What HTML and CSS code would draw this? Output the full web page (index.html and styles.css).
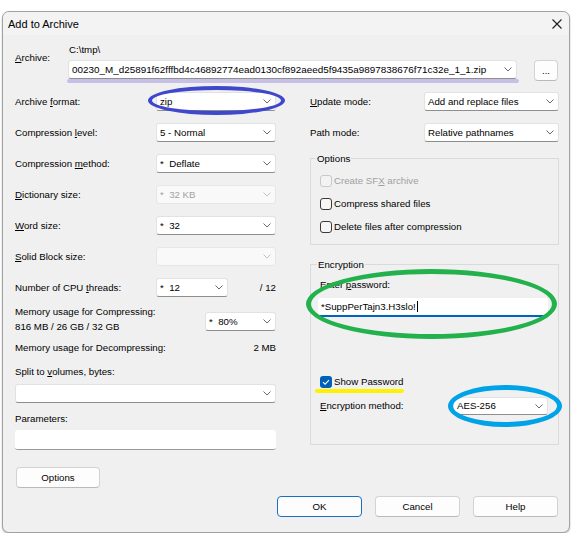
FILE: index.html
```html
<!DOCTYPE html>
<html lang="en">
<head>
<meta charset="utf-8">
<title>Add to Archive</title>
<link rel="stylesheet" href="styles.css">
</head>
<body>
<div class="dialog">
  <div class="titlebar">
    <span class="title">Add to Archive</span>
    <svg class="close" width="10" height="10" viewBox="0 0 10 10"><path d="M0.5 0.5L9.5 9.5M9.5 0.5L0.5 9.5" stroke="#1c1c1c" stroke-width="1.1" fill="none"/></svg>
  </div>

  <div class="content">
    <div class="archive">
      <span class="archive-label"><u>A</u>rchive:</span>
      <span class="archive-dir">C:\tmp\</span>
      <div class="combo archive-combo"><span class="path">00230_M_d25891f62fffbd4c46892774ead0130cf892aeed5f9435a9897838676f71c32e_1_1.zip</span><svg class="chev" width="8" height="5" viewBox="0 0 8 5"><path d="M0.5 0.5L4 4L7.5 0.5" fill="none" stroke="#6a6a6a"/></svg></div>
      <button class="btn browse">...</button>
    </div>

    <div class="columns">
      <div class="col-left">
        <div class="row"><span>Archive <u>f</u>ormat:</span><div class="combo"><span>zip</span><svg class="chev" width="8" height="5" viewBox="0 0 8 5"><path d="M0.5 0.5L4 4L7.5 0.5" fill="none" stroke="#6a6a6a"/></svg></div></div>
        <div class="row"><span>Compression <u>l</u>evel:</span><div class="combo"><span>5 - Normal</span><svg class="chev" width="8" height="5" viewBox="0 0 8 5"><path d="M0.5 0.5L4 4L7.5 0.5" fill="none" stroke="#6a6a6a"/></svg></div></div>
        <div class="row"><span>Compression <u>m</u>ethod:</span><div class="combo"><span>*&nbsp; Deflate</span><svg class="chev" width="8" height="5" viewBox="0 0 8 5"><path d="M0.5 0.5L4 4L7.5 0.5" fill="none" stroke="#6a6a6a"/></svg></div></div>
        <div class="row"><span><u>D</u>ictionary size:</span><div class="combo disabled"><span>*&nbsp; 32 KB</span><svg class="chev" width="8" height="5" viewBox="0 0 8 5"><path d="M0.5 0.5L4 4L7.5 0.5" fill="none" stroke="#c4c4c4"/></svg></div></div>
        <div class="row"><span><u>W</u>ord size:</span><div class="combo"><span>*&nbsp; 32</span><svg class="chev" width="8" height="5" viewBox="0 0 8 5"><path d="M0.5 0.5L4 4L7.5 0.5" fill="none" stroke="#6a6a6a"/></svg></div></div>
        <div class="row"><span><u>S</u>olid Block size:</span><div class="combo disabled"><span></span><svg class="chev" width="8" height="5" viewBox="0 0 8 5"><path d="M0.5 0.5L4 4L7.5 0.5" fill="none" stroke="#c4c4c4"/></svg></div></div>
        <div class="row row-cpu"><span>Number of CPU <u>t</u>hreads:</span><div class="combo"><span>*&nbsp; 12</span><svg class="chev" width="8" height="5" viewBox="0 0 8 5"><path d="M0.5 0.5L4 4L7.5 0.5" fill="none" stroke="#6a6a6a"/></svg></div><span class="num">/ 12</span></div>

        <div class="mem">
          <div class="mem-text">
            <div>Memory usage for Compressing:</div>
            <div>816 MB / 26 GB / 32 GB</div>
          </div>
          <div class="combo mem-combo"><span>*&nbsp; 80%</span><svg class="chev" width="8" height="5" viewBox="0 0 8 5"><path d="M0.5 0.5L4 4L7.5 0.5" fill="none" stroke="#6a6a6a"/></svg></div>
        </div>

        <div class="decomp"><span>Memory usage for Decompressing:</span><span>2 MB</span></div>

        <div class="field-label split-label">Split to <u>v</u>olumes, bytes:</div>
        <div class="combo wide"><span></span><svg class="chev" width="8" height="5" viewBox="0 0 8 5"><path d="M0.5 0.5L4 4L7.5 0.5" fill="none" stroke="#6a6a6a"/></svg></div>

        <div class="field-label">Parameters:</div>
        <div class="textbox"></div>

        <button class="btn options-btn">Options</button>
      </div>

      <div class="col-right">
        <div class="row row-r"><span><u>U</u>pdate mode:</span><div class="combo"><span>Add and replace files</span><svg class="chev" width="8" height="5" viewBox="0 0 8 5"><path d="M0.5 0.5L4 4L7.5 0.5" fill="none" stroke="#6a6a6a"/></svg></div></div>
        <div class="row row-r"><span>Path mode:</span><div class="combo"><span>Relative pathnames</span><svg class="chev" width="8" height="5" viewBox="0 0 8 5"><path d="M0.5 0.5L4 4L7.5 0.5" fill="none" stroke="#6a6a6a"/></svg></div></div>

        <fieldset class="group group-options">
          <legend>Options</legend>
          <div class="checks">
            <div class="check disabled"><span class="box"></span><span>Create SF<u>X</u> archive</span></div>
            <div class="check"><span class="box"></span><span>Compress shared files</span></div>
            <div class="check"><span class="box"></span><span>Delete files after compression</span></div>
          </div>
        </fieldset>

        <fieldset class="group group-enc">
          <legend>Encryption</legend>
          <div class="enc-label">Enter <u>p</u>assword:</div>
          <div class="pw-input"><span>*SuppPerTajn3.H3slo!</span><span class="caret"></span></div>
          <div class="check checked show-pw"><span class="box"><svg width="12" height="12" viewBox="0 0 12 12"><path d="M3 6.2L5.1 8.2L9 4.2" fill="none" stroke="#fff" stroke-width="1.1"/></svg></span><span>Show Password</span></div>
          <div class="enc-method"><span><u>E</u>ncryption method:</span><div class="combo"><span>AES-256</span><svg class="chev" width="8" height="5" viewBox="0 0 8 5"><path d="M0.5 0.5L4 4L7.5 0.5" fill="none" stroke="#6a6a6a"/></svg></div></div>
        </fieldset>
      </div>
    </div>

    <div class="footer">
      <button class="btn default">OK</button>
      <button class="btn">Cancel</button>
      <button class="btn">Help</button>
    </div>
  </div>

  <!-- hand-drawn highlight marks over the form -->
  <div class="mark mark-path"></div>
  <div class="mark ring ring-format"></div>
  <div class="mark ring ring-password"></div>
  <div class="mark mark-show"></div>
  <div class="mark ring ring-method"></div>
</div>
</body>
</html>
```

FILE: styles.css
```css
* { box-sizing: border-box; }

html, body {
  margin: 0;
  background: #ffffff;
}

body {
  font-family: "Liberation Sans", Arial, sans-serif;
  font-size: 9.7px;
  line-height: 14px;
  color: #000;
}

u { text-underline-offset: 1px; }

/* window frame */
.dialog {
  position: relative;
  width: 568px;
  margin: 11px 0 0 2px;
  background: #f0f0f0;
  border: 1px solid #a2a2a2;
  border-radius: 7px;
  box-shadow: 0 1px 2px rgba(0, 0, 0, 0.28);
}

.titlebar {
  height: 23px;
  display: flex;
  align-items: center;
  justify-content: space-between;
  padding: 0 7px 0 5px;
  background: #f3f3f3;
  border-radius: 7px 7px 0 0;
}

.title { font-size: 11px; }

.content {
  padding: 0 10px 15px 12px;
}

/* archive path */
.archive {
  display: grid;
  grid-template-columns: 36px 449px 24px;
  grid-template-rows: 14px 20px;
  column-gap: 17px;
  row-gap: 3px;
  padding-top: 8px;
}

.archive-label {
  grid-column: 1;
  grid-row: 1 / 3;
  align-self: center;
  padding: 0 0 7px 0;
  white-space: nowrap;
}

.archive-dir {
  grid-column: 2;
  grid-row: 1;
  padding-left: 1px;
}

.archive-combo {
  grid-column: 2;
  grid-row: 2;
  height: 20px;
  border-color: #b8b8b8;
  border-bottom-color: #8a8a8a;
}

.archive-combo .path { font-size: 9.9px; }

.browse {
  grid-column: 3;
  grid-row: 2;
  height: 21px;
  padding: 0;
  align-self: center;
}

/* combo boxes */
.combo {
  height: 19px;
  display: flex;
  align-items: center;
  justify-content: space-between;
  padding: 0 4px 0 3px;
  background: #fff;
  border: 1px solid #e2e2e2;
  border-bottom-color: #8e8e8e;
  border-radius: 3px;
  white-space: nowrap;
  overflow: hidden;
}

.combo .chev { flex: none; }

.combo.disabled {
  background: #f9f9f9;
  border-color: #e6e6e6;
  color: #a2a2a2;
}

/* two columns */
.columns {
  display: grid;
  grid-template-columns: 261px 249px;
  column-gap: 34px;
  align-items: start;
  margin-top: 6px;
}

.row {
  display: grid;
  grid-template-columns: 141px 120px;
  align-items: center;
  height: 31px;
}

.row-cpu { grid-template-columns: 141px 72px 1fr; }
.row-cpu .num { text-align: right; }

.row-r { grid-template-columns: 114px 135px; }

.mem {
  display: grid;
  grid-template-columns: 1fr 71px;
  margin-top: 1px;
  height: 30px;
}

.mem-text { line-height: 15px; }

.mem-combo {
  align-self: end;
  margin-bottom: 3px;
}

.decomp {
  display: flex;
  justify-content: space-between;
  line-height: 16px;
  margin-top: 6px;
}

.field-label { margin-top: 9px; }

.combo.wide { margin-top: 5px; }

.textbox {
  height: 20px;
  margin-top: 4px;
  background: #fff;
  border-bottom: 1px solid #9a9a9a;
  border-radius: 3px;
}

/* buttons */
.btn {
  font-family: inherit;
  font-size: 9.7px;
  color: #000;
  height: 21px;
  background: #fdfdfd;
  border: 1px solid #d3d3d3;
  border-bottom-color: #bababa;
  border-radius: 4px;
}

.options-btn {
  display: block;
  width: 84px;
  margin: 17px 0 0 1px;
}

.footer {
  display: flex;
  justify-content: flex-end;
  gap: 13px;
  margin: 8px 1px 0 0;
}

.footer .btn { width: 85px; }

.btn.default { border: 1px solid #1a6fc4; }

/* group boxes */
.group {
  margin: 4px 0 0;
  padding: 0 10px 6px 5px;
  border: 1px solid #dadada;
  min-width: 0;
}

.group legend {
  padding: 0 1px;
  line-height: 13px;
}

.checks { margin-top: 4px; }

.check {
  display: flex;
  align-items: center;
  gap: 2px;
  height: 23px;
  margin-left: 4px;
}

.check .box {
  width: 12px;
  height: 12px;
  flex: none;
  border: 1px solid #3a3a3a;
  border-radius: 3px;
  background: #f6f6f6;
}

.check.disabled { color: #a0a0a0; }
.check.disabled .box { border-color: #c9c9c9; background: #f3f3f3; }

.group-enc {
  margin-top: 13px;
  padding: 0 10px 29px 6px;
}

.enc-label {
  margin: 7px 0 0 3px;
}

.pw-input {
  display: flex;
  align-items: center;
  height: 19px;
  margin: 6px 0 0 1px;
  padding: 0 0 0 3px;
  background: #fff;
  border-bottom: 2px solid #0063bf;
  border-radius: 3px 3px 0 0;
}

.caret {
  width: 1px;
  height: 11px;
  margin-left: 1px;
  background: #000;
}

.show-pw {
  height: 15px;
  margin: 57px 0 0 3px;
}

.check.checked .box {
  border: none;
  background: #005fb8;
}

.check.checked .box svg { display: block; }

.enc-method {
  display: grid;
  grid-template-columns: 1fr 95px;
  align-items: center;
  margin: 8px 0 0 3px;
}

.enc-method .combo { height: 18px; }

/* highlight marks */
.mark {
  position: absolute;
  pointer-events: none;
}

.ring {
  border-radius: 50%;
  border-style: solid;
}

.mark-path {
  left: 64px;
  top: 67px;
  width: 452px;
  height: 4px;
  border-radius: 2px;
  background: #c8bfe7;
}

.ring-format {
  left: 145px;
  top: 74px;
  width: 137px;
  height: 29px;
  border-width: 4px;
  border-color: #3f48cc;
}

.ring-password {
  left: 303px;
  top: 257px;
  width: 251px;
  height: 70px;
  border-width: 5px;
  border-color: #22b14c;
}

.mark-show {
  left: 312px;
  top: 377px;
  width: 89px;
  height: 4px;
  border-radius: 2px;
  background: #fff200;
}

.ring-method {
  left: 445px;
  top: 373px;
  width: 114px;
  height: 42px;
  border-width: 5px;
  border-color: #00a2e8;
}
```
